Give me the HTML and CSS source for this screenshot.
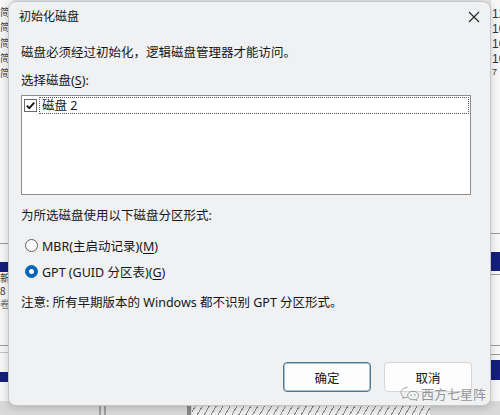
FILE: index.html
```html
<!DOCTYPE html>
<html lang="zh-CN">
<head>
<meta charset="utf-8">
<title>初始化磁盘</title>
<link rel="stylesheet" href="styles.css">
</head>
<body>
<div class="desk">
  <div class="bg-left">
    <div class="bl-rows">
      <div>简</div><div>简</div><div>简</div><div>简</div><div>简</div>
    </div>
    <div class="bl-line l1"></div>
    <div class="bl-navy n1"></div>
    <div class="bl-text t1">新</div>
    <div class="bl-text t2">8</div>
    <div class="bl-text t3">卷</div>
    <div class="bl-line l2"></div>
    <div class="bl-line l3"></div>
    <div class="bl-navy n2"></div>
  </div>
  <div class="bg-right">
    <div class="br-rows">
      <div>12</div><div>10</div><div>10</div><div>10</div><div class="small">7</div>
    </div>
    <div class="bl-line r1"></div>
    <div class="bl-navy rn1"></div>
    <div class="bl-line r2"></div>
    <div class="bl-line r3"></div>
    <div class="bl-line r4"></div>
    <div class="bl-navy rn2"></div>
  </div>
  <div class="bg-bottom">
    <div class="bb-bar b1"></div>
    <div class="bb-bar b2"></div>
    <div class="bb-bar b3"></div>
    <div class="bb-hatch"></div>
  </div>

  <div class="dialog">
    <div class="titlebar">
      <span class="title">初始化磁盘</span>
      <svg class="close" width="12" height="12" viewBox="0 0 12 12"><path d="M1 1 L11 11 M11 1 L1 11" stroke="#222" stroke-width="1.1" fill="none"/></svg>
    </div>
    <div class="body">
      <div class="msg">磁盘必须经过初始化，逻辑磁盘管理器才能访问。</div>
      <div class="label">选择磁盘(<u>S</u>):</div>
      <div class="listbox">
        <div class="item">
          <svg class="cb" width="13" height="13" viewBox="0 0 13 13"><rect x="0.5" y="0.5" width="12" height="12" fill="#fff" stroke="#6a6a6a"/><path d="M2.8 6.6 L5.3 9.1 L10.2 3.6" stroke="#111" stroke-width="1.8" fill="none"/></svg>
          <span class="focus">磁盘 2</span>
        </div>
      </div>
      <div class="label section">为所选磁盘使用以下磁盘分区形式:</div>
      <div class="radio first"><span class="rb"></span><span>MBR(主启动记录)(<u>M</u>)</span></div>
      <div class="radio second"><span class="rb on"></span><span>GPT (GUID 分区表)(<u>G</u>)</span></div>
      <div class="note">注意: 所有早期版本的 Windows 都不识别 GPT 分区形式。</div>
    </div>
    <div class="footer">
      <button class="btn default">确定</button>
      <button class="btn">取消</button>
    </div>
    <div class="watermark">
      <svg width="20" height="16" viewBox="0 0 20 16"><path d="M7.5 1.5 C3.8 1.5 1 3.8 1 6.6 C1 8.2 1.9 9.6 3.3 10.5 L2.8 12.5 L5 11.3 C5.8 11.5 6.6 11.7 7.5 11.7" stroke="#9a9a9a" stroke-width="1" fill="none"/><path d="M13 5.2 C10 5.2 7.6 7.1 7.6 9.5 C7.6 11.9 10 13.8 13 13.8 C13.7 13.8 14.4 13.7 15 13.5 L17 14.6 L16.5 12.8 C17.8 12 18.6 10.8 18.6 9.5 C18.6 7.1 16.1 5.2 13 5.2 Z" stroke="#9a9a9a" stroke-width="1" fill="none"/><circle cx="11" cy="9" r="0.8" fill="#9a9a9a"/><circle cx="15" cy="9" r="0.8" fill="#9a9a9a"/></svg>
      <span>西方七星阵</span>
    </div>
  </div>
</div>
</body>
</html>
```

FILE: styles.css
```css
* { box-sizing: border-box; }
html, body { margin: 0; padding: 0; }
body {
  width: 500px;
  height: 415px;
  overflow: hidden;
  font-family: "Noto Sans", "Noto Sans CJK SC", sans-serif;
  color: #161616;
}
.desk {
  position: relative;
  width: 500px;
  height: 415px;
  background: #e4e4e4;
  overflow: hidden;
}

/* background window pieces */
.bg-left {
  position: absolute;
  left: 0; top: 0;
  width: 12px; height: 415px;
  background: #f6f6f6;
}
.bl-rows {
  position: absolute;
  left: 0; top: 4px;
  font-family: "Noto Sans CJK SC", sans-serif;
  font-size: 10px;
  line-height: 15.3px;
  color: #444;
}
.bl-line { position: absolute; height: 1px; background: #9a9a9a; left: 0; right: 0; }
.bl-navy { position: absolute; left: 0; right: 0; background: #141f7e; }
.l1 { top: 243px; }
.n1 { top: 262px; height: 10px; }
.l2 { top: 345px; }
.l3 { top: 352px; background: #c0c0c0; }
.n2 { top: 372px; height: 10px; }
.bl-text {
  position: absolute;
  left: 0;
  font-family: "Noto Sans CJK SC", sans-serif;
  font-size: 10px;
  line-height: 11px;
  color: #333;
}
.t1 { top: 272px; }
.t2 { top: 285px; }
.t3 { top: 298px; color: #777; }

.bg-right {
  position: absolute;
  right: 0; top: 0;
  width: 9px; height: 415px;
  background: #f7f7f7;
  overflow: hidden;
}
.br-rows {
  position: absolute;
  left: 1px; top: 7px;
  font-family: "Liberation Sans", sans-serif;
  font-size: 12px;
  line-height: 15px;
  color: #333;
}
.br-rows .small { font-size: 9px; line-height: 10px; }
.r1 { top: 233px; }
.rn1 { top: 252px; height: 19px; }
.r2 { top: 274px; }
.r3 { top: 345px; }
.r4 { top: 354px; }
.rn2 { top: 360px; height: 20px; }

.bg-bottom {
  position: absolute;
  left: 0; right: 0; bottom: 0;
  height: 14px;
  background: #d9d9d9;
}
.bb-bar { position: absolute; top: 0; bottom: 0; width: 2px; background: #a0a0a0; }
.b1 { left: 99px; }
.b2 { left: 104px; }
.b3 { left: 187px; width: 4px; background: #888; }
.bb-hatch {
  position: absolute;
  top: 0; bottom: 0;
  left: 192px; width: 238px;
  background: repeating-linear-gradient(120deg, #f0f0f0 0 5px, #8a8a8a 5px 6px);
}

/* dialog */
.dialog {
  position: absolute;
  left: 8px; top: 1px;
  width: 483px; height: 405px;
  background: #eff1f3;
  border: 1px solid #c4c6c8;
  border-radius: 8px;
  box-shadow: 0 2px 8px rgba(0,0,0,0.18);
  display: flex;
  flex-direction: column;
}
.titlebar {
  height: 28px;
  display: flex;
  align-items: center;
  justify-content: space-between;
  padding: 0 10px 0 10px;
}
.title {
  font-family: "Noto Sans CJK SC", sans-serif;
  font-size: 12px;
  line-height: 16px;
}
.close { margin-top: 2px; }
.body {
  padding: 0 19px 0 12px;
  font-size: 12.5px;
}
.msg, .label, .note {
  font-family: "Noto Sans", "Noto Sans CJK SC", sans-serif;
  font-size: 12.5px;
  line-height: 18px;
  height: 18px;
  white-space: nowrap;
}
.msg { margin-top: 14px; }
.label { margin-top: 10px; }
.listbox {
  margin-top: 5px;
  height: 100px;
  background: #fff;
  border: 1px solid #8e8e8e;
  padding: 1px 1px 0 2px;
}
.item {
  display: flex;
  align-items: center;
  height: 17px;
}
.cb { flex: none; margin-right: 2px; }
.focus {
  flex: 1;
  height: 17px;
  line-height: 15px;
  padding-left: 2px;
  border: 1px dotted #555;
  font-size: 12.5px;
}
.label.section { margin-top: 12px; }
.radio {
  display: flex;
  align-items: center;
  height: 20px;
  font-size: 12.5px;
  padding-left: 4px;
}
.radio.first { margin-top: 10px; }
.radio.second { margin-top: 6px; }
.rb {
  width: 13px; height: 13px;
  border-radius: 50%;
  border: 1px solid #5c5c5c;
  background: #fbfbfb;
  margin-right: 4px;
  flex: none;
  display: flex;
  align-items: center;
  justify-content: center;
}
.rb.on {
  background: #0a64b8;
  border-color: #0a64b8;
}
.rb.on::after {
  content: "";
  width: 5px; height: 5px;
  border-radius: 50%;
  background: #fff;
}
.note { margin-top: 13px; }
u { text-decoration-thickness: 1px; text-underline-offset: 2px; }

.footer {
  margin-top: 50px;
  display: flex;
  justify-content: flex-end;
  gap: 13px;
  padding-right: 18px;
}
.btn {
  width: 88px;
  height: 30px;
  border-radius: 4px;
  background: #fdfdfd;
  border: 1px solid #d4d6d8;
  font-family: "Noto Sans CJK SC", sans-serif;
  font-size: 12.5px;
  color: #161616;
  padding: 0;
}
.btn.default {
  border: 1px solid #4f7890;
  box-shadow: inset 0 0 0 1px #a9c0cd;
}
.watermark {
  position: absolute;
  left: 391px; top: 384px;
  display: flex;
  align-items: center;
  gap: 1px;
  font-family: "Noto Sans CJK SC", sans-serif;
  font-size: 13px;
  line-height: 16px;
  color: rgba(130,130,130,0.85);
}
```
